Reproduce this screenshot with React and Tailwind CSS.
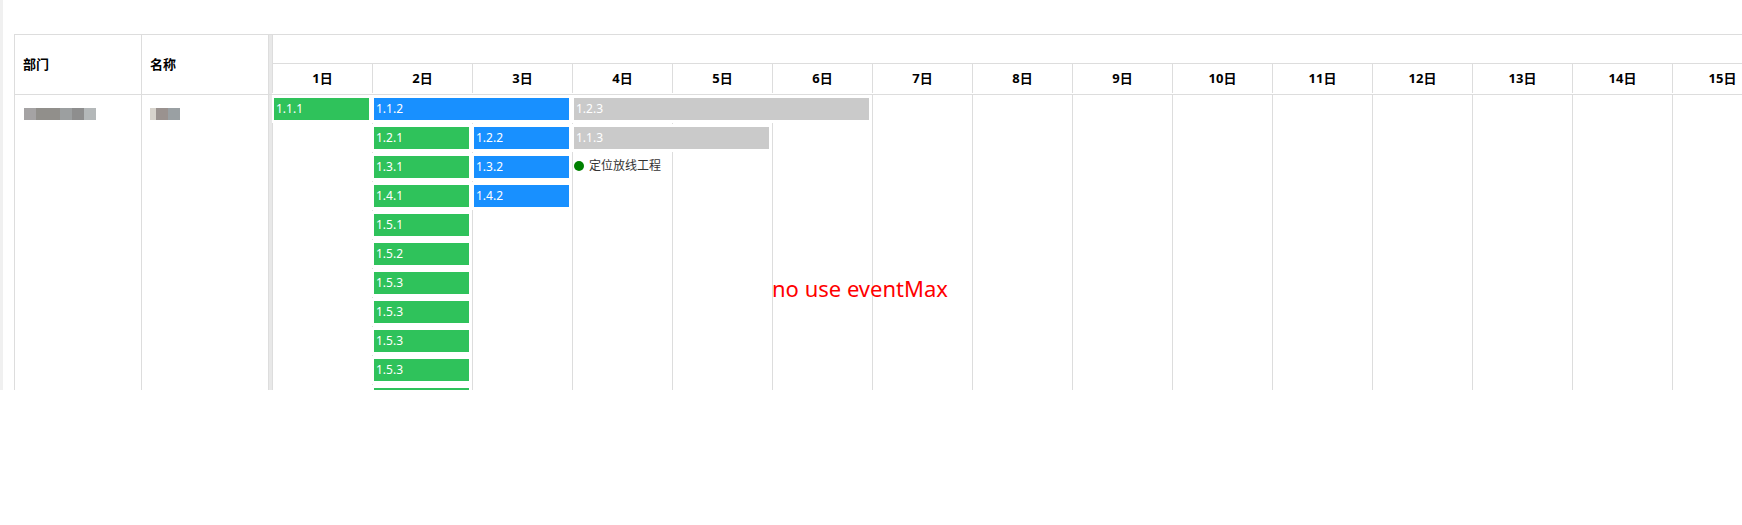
import React from 'react';

const days = Array.from({ length: 15 }, (_, i) => i + 1);

// row / start slot / span are all 0-based grid positions in the lane
const events = [
  { row: 0, start: 0, span: 1, color: 'green', title: '1.1.1' },
  { row: 0, start: 1, span: 2, color: 'blue', title: '1.1.2' },
  { row: 0, start: 3, span: 3, color: 'gray', title: '1.2.3' },
  { row: 1, start: 1, span: 1, color: 'green', title: '1.2.1' },
  { row: 1, start: 2, span: 1, color: 'blue', title: '1.2.2' },
  { row: 1, start: 3, span: 2, color: 'gray', title: '1.1.3' },
  { row: 2, start: 1, span: 1, color: 'green', title: '1.3.1' },
  { row: 2, start: 2, span: 1, color: 'blue', title: '1.3.2' },
  { row: 2, start: 3, span: 1, color: 'dot', title: '定位放线工程' },
  { row: 3, start: 1, span: 1, color: 'green', title: '1.4.1' },
  { row: 3, start: 2, span: 1, color: 'blue', title: '1.4.2' },
  { row: 4, start: 1, span: 1, color: 'green', title: '1.5.1' },
  { row: 5, start: 1, span: 1, color: 'green', title: '1.5.2' },
  { row: 6, start: 1, span: 1, color: 'green', title: '1.5.3' },
  { row: 7, start: 1, span: 1, color: 'green', title: '1.5.3' },
  { row: 8, start: 1, span: 1, color: 'green', title: '1.5.3' },
  { row: 9, start: 1, span: 1, color: 'green', title: '1.5.3' },
  { row: 10, start: 1, span: 1, color: 'green', title: '' },
];

const barColors = {
  green: 'bg-[#2fc25b]',
  blue: 'bg-[#1890ff]',
  gray: 'bg-[#cacaca]',
};

function EventItem({ ev }) {
  const place = { gridRow: ev.row + 1, gridColumn: `${ev.start + 1} / span ${ev.span}` };

  if (ev.color === 'dot') {
    return (
      <div style={place} className="pl-[2px] pt-[3px]">
        <div className="flex h-[20px] items-center gap-[5px]">
          <span className="h-[10px] w-[10px] rounded-full bg-[#008000]" />
          <span className="text-[12px] text-[#333]">{ev.title}</span>
        </div>
      </div>
    );
  }

  return (
    <div style={place} className="bg-white pl-[2px] pr-[3px] pt-[3px]">
      <div className={`h-[22px] pl-[2px] text-[12px] leading-[22px] text-white ${barColors[ev.color]}`}>
        {ev.title}
      </div>
    </div>
  );
}

// blurred resource titles
function Mosaic({ blocks }) {
  return (
    <div className="flex h-[12px]">
      {blocks.map((b, i) => (
        <div key={i} className={b} />
      ))}
    </div>
  );
}

export default function App() {
  return (
    <div
      className="flex h-[390px] w-full overflow-hidden bg-white"
      style={{ fontFamily: '"Noto Sans", "Noto Sans CJK SC", sans-serif' }}
    >
      <div className="w-[3px] shrink-0 bg-[#f0f0f0]" />
      <div className="flex-1 overflow-hidden pl-[11px] pt-[34px]">
        <div className="flex h-full w-[1760px] flex-col border-t border-[#ddd]">
          {/* header */}
          <div className="flex shrink-0 border-b border-[#ddd]">
            <div className="flex h-[59px] w-[127px] shrink-0 items-center border-l border-[#ddd] px-2 text-[13px] font-bold text-black">
              部门
            </div>
            <div className="flex h-[59px] w-[127px] shrink-0 items-center border-l border-[#ddd] px-2 text-[13px] font-bold text-black">
              名称
            </div>
            <div className="w-[4px] shrink-0 border-l border-[#ddd] bg-[#e8e8e8]" />
            <div className="flex shrink-0 flex-col">
              <div className="h-[29px] border-b border-l border-[#ddd]" />
              <div className="flex h-[29px]">
                {days.map((d) => (
                  <div
                    key={d}
                    className="flex w-[100px] shrink-0 items-center justify-center border-l border-[#ddd] text-[13px] font-bold text-black"
                  >
                    {d}日
                  </div>
                ))}
              </div>
            </div>
          </div>

          {/* body */}
          <div className="flex flex-1">
            <div className="w-[127px] shrink-0 border-l border-[#ddd] pl-[9px] pt-[13px]">
              <Mosaic
                blocks={[
                  'w-[12px] bg-[#a5a3a4]',
                  'w-[24px] bg-[#918f8b]',
                  'w-[12px] bg-[#9c9fa0]',
                  'w-[12px] bg-[#8e8e8e]',
                  'w-[12px] bg-[#b4b8b9]',
                ]}
              />
            </div>
            <div className="w-[127px] shrink-0 border-l border-[#ddd] pl-[8px] pt-[13px]">
              <Mosaic
                blocks={[
                  'w-[6px] bg-[#d7d3cc]',
                  'w-[12px] bg-[#9a928f]',
                  'w-[12px] bg-[#9aa0a3]',
                ]}
              />
            </div>
            <div className="w-[4px] shrink-0 border-l border-[#ddd] bg-[#e8e8e8]" />
            <div className="relative w-[1500px] shrink-0">
              <div className="absolute inset-0 grid grid-cols-[repeat(15,100px)]">
                {days.map((d) => (
                  <div key={d} className="border-l border-[#ddd]" />
                ))}
              </div>
              <div className="relative grid auto-rows-[28px] grid-cols-[repeat(15,100px)] gap-y-px">
                {events.map((ev, i) => (
                  <EventItem key={i} ev={ev} />
                ))}
              </div>
              <div className="absolute left-[500px] top-[179px] text-[22px] leading-[28px] text-[#ff0000]">
                no use eventMax
              </div>
            </div>
          </div>
        </div>
      </div>
    </div>
  );
}
